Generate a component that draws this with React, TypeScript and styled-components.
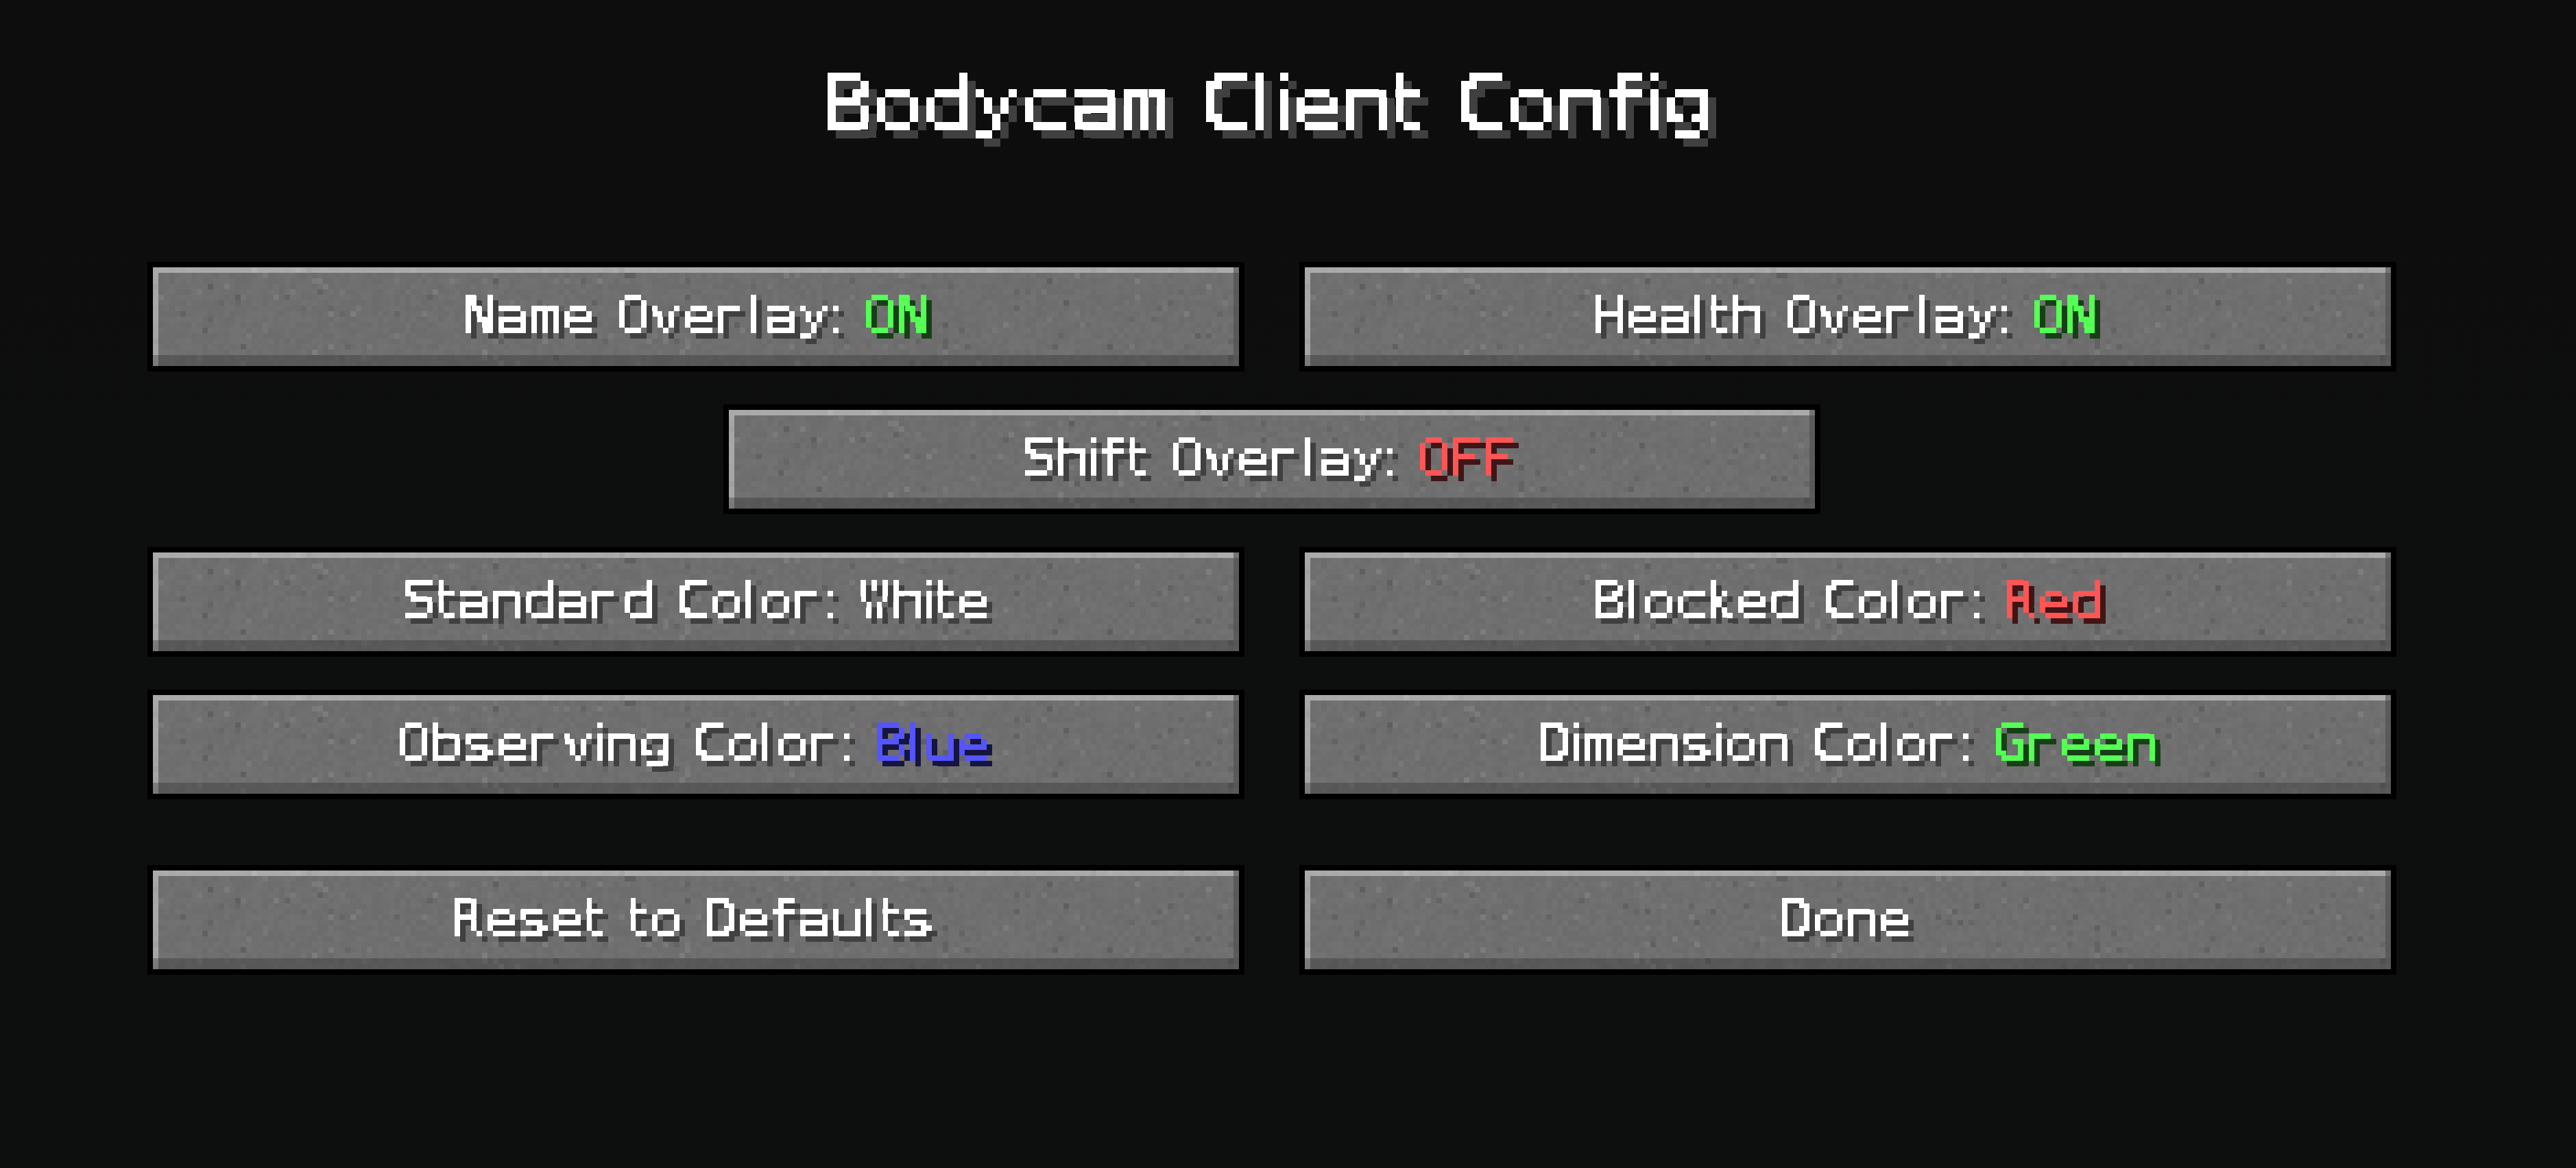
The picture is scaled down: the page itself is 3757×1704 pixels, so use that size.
import React, { useMemo } from "react";
import styled, { createGlobalStyle } from "styled-components";

const Global = createGlobalStyle`
  html, body { margin: 0; padding: 0; background: #0d0e0e; }
  #root { width: 3757px; height: 1704px; overflow: hidden; }
`;

const Page = styled.main`
  box-sizing: border-box;
  width: 3757px;
  height: 1704px;
  padding: 82px 0 0 215px;
  background: linear-gradient(#0d0d0d 0%, #0d0e0e 55%, #0d0f0f 100%);
  font-family: "DejaVu Sans", sans-serif;
`;
const Column = styled.div`
  width: 3280px;
  display: flex;
  flex-direction: column;
`;
const Title = styled.h1`
  margin: 0 0 156px;
  display: flex;
  justify-content: center;
  font-weight: 400;
`;
const Rows = styled.div`
  display: flex;
  flex-direction: column;
  gap: 48px;
`;
const Row = styled.div<{ $footer?: boolean }>`
  display: flex;
  justify-content: center;
  gap: 80px;
  margin-top: ${(p) => (p.$footer ? "48px" : "0")};
`;
const McButton = styled.button`
  box-sizing: border-box;
  width: 1600px;
  height: 160px;
  padding: 0;
  border: 8px solid #000;
  background: #000;
  display: grid;
  place-items: center;
  font: inherit;
  color: #fff;
`;
const Stone = styled.svg`
  grid-area: 1 / 1;
  width: 100%;
  height: 100%;
  display: block;
`;
const Label = styled.span<{ $u: number; $odd: boolean }>`
  grid-area: 1 / 1;
  display: flex;
  padding-left: ${(p) => p.$u}px;
  padding-right: ${(p) => (p.$odd ? 0 : p.$u)}px;
  filter: url(#mc-pixel-${(p) => p.$u});
`;
const Tint = styled.span<{ $color: string }>`
  display: contents;
  color: ${(p) => p.$color};
`;
const Cell = styled.span<{ $u: number; $w: number }>`
  flex: none;
  display: block;
  width: ${(p) => p.$w * p.$u}px;
  height: ${(p) => p.$u * 12}px;
`;
const Ink = styled.span<{ $u: number; $stroke: number }>`
  display: block;
  width: max-content;
  white-space: pre;
  transform-origin: 0 0;
  font-family: "DejaVu Sans", sans-serif;
  font-size: ${(p) => p.$u * 9.6}px;
  line-height: ${(p) => p.$u * 12}px;
  -webkit-text-stroke: ${(p) => p.$stroke}px currentColor;
`;
const Defs = styled.svg`
  display: block;
  width: 0;
  height: 0;
`;

const WHITE = "#ffffff";
const GREEN = "#55ff55";
const RED = "#ff5555";
const BLUE = "#5555ff";

type Part = { text: string; color: string };

const ADVANCE: Record<string, number> = { " ": 4, i: 2, l: 3, t: 4, f: 5, k: 5, ":": 2 };
const advance = (c: string) => ADVANCE[c] ?? 6;

const rowsOf = (c: string): [number, number] => {
  if (c === ":") return [2, 7];
  if (c === "g" || c === "y") return [2, 8];
  if (c === "t") return [0.35, 7];
  if (/[A-Zbdfhikl]/.test(c)) return [0, 7];
  return [2, 7];
};

let ctx: CanvasRenderingContext2D | null = null;
function fit(c: string, u: number): string | undefined {
  if (c === " ") return undefined;
  if (!ctx) ctx = document.createElement("canvas").getContext("2d");
  const size = u * 9.6;
  ctx!.font = `400 ${size}px "DejaVu Sans"`;
  const m = ctx!.measureText(c);
  const left = -m.actualBoundingBoxLeft;
  const right = m.actualBoundingBoxRight;
  const asc = m.actualBoundingBoxAscent;
  const desc = m.actualBoundingBoxDescent;
  const baseline = (u * 12) / 2 + (m.fontBoundingBoxAscent - m.fontBoundingBoxDescent) / 2;
  const [r0, r1] = rowsOf(c);
  const targetW = (advance(c) - 1) * u;
  const sx = Math.min(targetW / (right - left), 1.12);
  const sy = ((r1 - r0) * u) / (asc + desc);
  const tx = -left * sx;
  const ty = (2 + r0) * u - (baseline - asc) * sy;
  return `matrix(${sx.toFixed(4)},0,0,${sy.toFixed(4)},${tx.toFixed(2)},${ty.toFixed(2)})`;
}

function PixelText({ parts, u }: { parts: Part[]; u: number }) {
  const width = parts.reduce(
    (sum, part) => sum + [...part.text].reduce((s, c) => s + advance(c), 0),
    0
  );
  return (
    <Label $u={u} $odd={width % 2 === 1}>
      {parts.map((part, i) => (
        <Tint key={i} $color={part.color}>
          {[...part.text].map((c, j) => (
            <Cell key={j} $u={u} $w={advance(c)}>
              <Ink $u={u} $stroke={u * 0.07} style={{ transform: fit(c, u) }}>
                {c}
              </Ink>
            </Cell>
          ))}
        </Tint>
      ))}
    </Label>
  );
}

function PixelFilter({ u }: { u: number }) {
  const inset = u / 2 - 1;
  return (
    <filter
      id={`mc-pixel-${u}`}
      x="0"
      y="0"
      width="100%"
      height="100%"
      colorInterpolationFilters="sRGB"
    >
      <feFlood x={inset} y={inset} width="2" height="2" floodColor="#000" />
      <feComposite x="0" y="0" width={u} height={u} />
      <feTile result="grid" />
      <feComposite in="SourceGraphic" in2="grid" operator="in" />
      <feMorphology operator="dilate" radius={inset} />
      <feComponentTransfer result="px">
        <feFuncA type="discrete" tableValues="0 1 1 1" />
      </feComponentTransfer>
      <feOffset dx={u} dy={u} />
      <feColorMatrix values=".25 0 0 0 0 0 .25 0 0 0 0 0 .25 0 0 0 0 0 1 0" result="shadow" />
      <feMerge>
        <feMergeNode in="shadow" />
        <feMergeNode in="px" />
      </feMerge>
    </filter>
  );
}

function stoneCells() {
  let seed = 20240611;
  const rnd = () => {
    seed = (seed * 1664525 + 1013904223) >>> 0;
    return seed / 4294967296;
  };
  const cells: { x: number; y: number; v: number }[] = [];
  const COLS = 198;
  const ROWS = 18;
  for (let y = 0; y < ROWS; y++) {
    for (let x = 0; x < COLS; x++) {
      const n = rnd();
      const spot = rnd();
      let jitter = (n - 0.5) * 7;
      if (spot < 0.025) jitter = -7 - rnd() * 9;
      else if (spot > 0.97) jitter = 6 + rnd() * 8;
      let base = 111;
      let amount = 1;
      if (y >= ROWS - 2) {
        base = x === 0 ? 122 : 88;
        amount = 0.7;
      } else if (x === COLS - 1) {
        base = y === 0 ? 118 : 90;
        amount = 0.6;
      } else if (y === 0) {
        base = 170;
        amount = 0.6;
      } else if (x === 0) {
        base = 166;
        amount = 0.5;
      }
      cells.push({ x, y, v: Math.round(base + jitter * amount) });
    }
  }
  return cells;
}

const MC = ({ parts }: { parts: Part[] }) => (
  <McButton type="button">
    <Stone viewBox="0 0 198 18" preserveAspectRatio="none" shapeRendering="crispEdges">
      <use href="#mc-stone" />
    </Stone>
    <PixelText parts={parts} u={8} />
  </McButton>
);

const plain = (text: string): Part[] => [{ text, color: WHITE }];
const kv = (key: string, value: string, color: string): Part[] => [
  { text: key + " ", color: WHITE },
  { text: value, color },
];

export default function App() {
  const cells = useMemo(stoneCells, []);
  return (
    <Page>
      <Global />
      <Defs aria-hidden="true">
        <defs>
          <PixelFilter u={8} />
          <PixelFilter u={12} />
          <g id="mc-stone">
            {cells.map((c, i) => (
              <rect
                key={i}
                x={c.x}
                y={c.y}
                width="1"
                height="1"
                fill={`rgb(${c.v},${c.v},${c.v})`}
              />
            ))}
          </g>
        </defs>
      </Defs>
      <Column>
        <Title>
          <PixelText parts={plain("Bodycam Client Config")} u={12} />
        </Title>
        <Rows>
          <Row>
            <MC parts={kv("Name Overlay:", "ON", GREEN)} />
            <MC parts={kv("Health Overlay:", "ON", GREEN)} />
          </Row>
          <Row>
            <MC parts={kv("Shift Overlay:", "OFF", RED)} />
          </Row>
          <Row>
            <MC parts={kv("Standard Color:", "White", WHITE)} />
            <MC parts={kv("Blocked Color:", "Red", RED)} />
          </Row>
          <Row>
            <MC parts={kv("Observing Color:", "Blue", BLUE)} />
            <MC parts={kv("Dimension Color:", "Green", GREEN)} />
          </Row>
          <Row $footer>
            <MC parts={plain("Reset to Defaults")} />
            <MC parts={plain("Done")} />
          </Row>
        </Rows>
      </Column>
    </Page>
  );
}
